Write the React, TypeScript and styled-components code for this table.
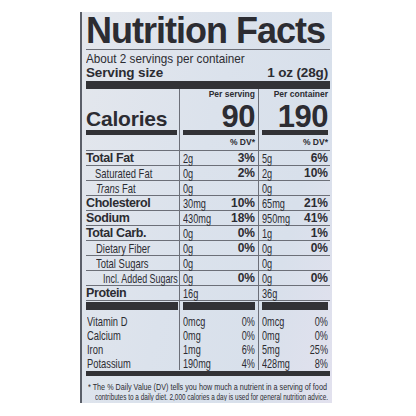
import { FC, ReactNode } from "react";
import styled, { createGlobalStyle } from "styled-components";

const INK = "#2c2c32";
const RULE = "#6c6f78";

const GlobalStyle = createGlobalStyle`
  html, body { margin: 0; padding: 0; background: #ffffff; }
  body { font-family: "Liberation Sans", Arial, sans-serif; color: ${INK}; }
`;

const Page = styled.div`
  width: 416px;
  height: 416px;
  box-sizing: border-box;
  padding: 12px 0 0 80px;
  background: #ffffff;
  overflow: hidden;
`;

const Label = styled.div`
  width: 252px;
  height: 391px;
  box-sizing: border-box;
  border-left: 2px solid #5b5f69;
  padding: 0 2px 0 4px;
  display: flex;
  flex-direction: column;
  background: linear-gradient(105deg, #e4e7ed 0%, #dbe2ec 45%, #d8e0eb 75%, #e2e1ee 100%);
`;

// the label is set in a condensed grotesque, so Liberation Sans gets squeezed
const Narrow = styled.span<{ $s: number; $right?: boolean }>`
  display: inline-block;
  white-space: nowrap;
  transform: scaleX(${(p) => p.$s});
  transform-origin: ${(p) => (p.$right ? "right" : "left")} center;
`;

const Title = styled.h1`
  margin: 0;
  padding: 1.5px 0 1px;
  font-size: 36px;
  line-height: 34px;
  font-weight: 700;
  letter-spacing: -1px;
  white-space: nowrap;
  border-bottom: 1px solid ${RULE};
`;

const Servings = styled.div`
  font-size: 13px;
  line-height: 15px;
  padding-top: 1px;
`;

const ServingSize = styled.div`
  display: flex;
  justify-content: space-between;
  font-size: 13.5px;
  font-weight: 700;
  line-height: 14px;
  letter-spacing: -0.15px;
  padding: 0.5px 2px 0 0;
`;

const Bar = styled.div<{ $h: number; $mt?: number; $mr?: number }>`
  flex: 1;
  height: ${(p) => p.$h}px;
  margin: ${(p) => p.$mt ?? 0}px ${(p) => p.$mr ?? 0}px 0 0;
  background: #323236;
`;

const Row = styled.div<{ $h: number; $line?: boolean }>`
  display: grid;
  grid-template-columns: 93px 79px 72px;
  grid-template-rows: minmax(0, 1fr);
  height: ${(p) => p.$h}px;
  flex: none;
  box-sizing: border-box;
  border-top: ${(p) => (p.$line ? `1px solid ${RULE}` : "none")};
`;

const Cell = styled.div<{ $col: 1 | 2 | 3; $align?: "start" | "end" | "center" }>`
  display: flex;
  align-items: ${(p) => p.$align ?? "center"};
  justify-content: space-between;
  min-width: 0;
  min-height: 0;
  white-space: nowrap;
  border-left: ${(p) => (p.$col === 1 ? "none" : `1px solid ${RULE}`)};
  padding: ${(p) => (p.$col === 1 ? "0" : p.$col === 2 ? "0 3px 0 3px" : "0 2px 0 3px")};
`;

const Small = styled.span`
  margin-left: auto;
  font-size: 8.5px;
  font-weight: 700;
  line-height: 11px;
`;

const CaloriesText = styled.span`
  font-size: 21px;
  font-weight: 700;
  line-height: 21px;
  letter-spacing: -0.2px;
`;

const BigNum = styled.span`
  margin-left: auto;
  margin-top: 1px;
  font-size: 31px;
  font-weight: 700;
  line-height: 31px;
  letter-spacing: -0.5px;
`;

const BoldName = styled.span`
  font-size: 12.5px;
  font-weight: 700;
  letter-spacing: -0.4px;
`;

const Text = styled.span<{ $size: number; $indent?: number }>`
  font-size: ${(p) => p.$size}px;
  margin-left: ${(p) => p.$indent ?? 0}px;
`;

const Pct = styled.span`
  margin-left: auto;
  font-size: 12px;
  font-weight: 700;
`;

const Footnote = styled.div`
  font-size: 9.5px;
  line-height: 9.5px;
  padding-top: 6px;
  white-space: nowrap;
  overflow: hidden;
`;

const NoteLine = styled.div<{ $indent: number }>`
  margin-left: ${(p) => p.$indent}px;
`;

interface INutrient {
  name: ReactNode;
  bold?: boolean;
  indent?: number;
  squeeze?: number;
  serving: string;
  servingPct?: string;
  container: string;
  containerPct?: string;
}

const nutrients: INutrient[] = [
  { name: "Total Fat", bold: true, serving: "2g", servingPct: "3%", container: "5g", containerPct: "6%" },
  { name: "Saturated Fat", indent: 9, serving: "0g", servingPct: "2%", container: "2g", containerPct: "10%" },
  { name: <><i>Trans</i> Fat</>, indent: 10, serving: "0g", container: "0g" },
  { name: "Cholesterol", bold: true, serving: "30mg", servingPct: "10%", container: "65mg", containerPct: "21%" },
  { name: "Sodium", bold: true, serving: "430mg", servingPct: "18%", container: "950mg", containerPct: "41%" },
  { name: "Total Carb.", bold: true, serving: "0g", servingPct: "0%", container: "1g", containerPct: "1%" },
  { name: "Dietary Fiber", indent: 10, serving: "0g", servingPct: "0%", container: "0g", containerPct: "0%" },
  { name: "Total Sugars", indent: 10, serving: "0g", container: "0g" },
  { name: "Incl. Added Sugars", indent: 17, squeeze: 0.66, serving: "0g", servingPct: "0%", container: "0g", containerPct: "0%" },
  { name: "Protein", bold: true, serving: "16g", container: "36g" },
];

const vitamins = [
  { name: "Vitamin D", serving: "0mcg", servingPct: "0%", container: "0mcg", containerPct: "0%" },
  { name: "Calcium", serving: "0mg", servingPct: "0%", container: "0mg", containerPct: "0%" },
  { name: "Iron", serving: "1mg", servingPct: "6%", container: "5mg", containerPct: "25%" },
  { name: "Potassium", serving: "190mg", servingPct: "4%", container: "428mg", containerPct: "8%" },
];

const NutrientRow: FC<{ n: INutrient }> = ({ n }) => (
  <Row $h={15} $line>
    <Cell $col={1}>
      {n.bold ? (
        <BoldName>{n.name}</BoldName>
      ) : (
        <Text $size={13.5} $indent={n.indent}>
          <Narrow $s={n.squeeze ?? 0.7}>{n.name}</Narrow>
        </Text>
      )}
    </Cell>
    <Cell $col={2}>
      <Text $size={13.5}>
        <Narrow $s={0.68}>{n.serving}</Narrow>
      </Text>
      {n.servingPct && <Pct>{n.servingPct}</Pct>}
    </Cell>
    <Cell $col={3}>
      <Text $size={13.5}>
        <Narrow $s={0.68}>{n.container}</Narrow>
      </Text>
      {n.containerPct && <Pct>{n.containerPct}</Pct>}
    </Cell>
  </Row>
);

const App: FC = () => (
  <Page>
    <GlobalStyle />
    <Label>
      <Title>Nutrition Facts</Title>
      <Servings>
        <Narrow $s={0.9}>About 2 servings per container</Narrow>
      </Servings>
      <ServingSize>
        <span>Serving size</span>
        <span>1 oz (28g)</span>
      </ServingSize>
      <Bar $h={8} $mt={1} style={{ flex: "none" }} />

      <Row $h={11}>
        <Cell $col={1} />
        <Cell $col={2} $align="start">
          <Small>Per serving</Small>
        </Cell>
        <Cell $col={3} $align="start">
          <Small>Per container</Small>
        </Cell>
      </Row>
      <Row $h={29}>
        <Cell $col={1} $align="end">
          <CaloriesText>Calories</CaloriesText>
        </Cell>
        <Cell $col={2} $align="start">
          <BigNum>90</BigNum>
        </Cell>
        <Cell $col={3} $align="start">
          <BigNum>190</BigNum>
        </Cell>
      </Row>
      <Row $h={6}>
        <Cell $col={1} $align="end">
          <Bar $h={5} $mr={2} />
        </Cell>
        <Cell $col={2} $align="end">
          <Bar $h={5} />
        </Cell>
        <Cell $col={3} $align="end">
          <Bar $h={5} />
        </Cell>
      </Row>
      <Row $h={15}>
        <Cell $col={1} />
        <Cell $col={2}>
          <Small>% DV*</Small>
        </Cell>
        <Cell $col={3}>
          <Small>% DV*</Small>
        </Cell>
      </Row>

      {nutrients.map((n, i) => (
        <NutrientRow key={i} n={n} />
      ))}

      <Row $h={14} $line>
        <Cell $col={1} $align="start">
          <Bar $h={8} $mt={1} $mr={1} />
        </Cell>
        <Cell $col={2} $align="start">
          <Bar $h={8} $mt={1} />
        </Cell>
        <Cell $col={3} $align="start">
          <Bar $h={8} $mt={1} />
        </Cell>
      </Row>
      {vitamins.map((v) => (
        <Row $h={14} key={v.name}>
          <Cell $col={1}>
            <Text $size={13} $indent={1}>
              <Narrow $s={0.72}>{v.name}</Narrow>
            </Text>
          </Cell>
          <Cell $col={2}>
            <Text $size={13}>
              <Narrow $s={0.7}>{v.serving}</Narrow>
            </Text>
            <Text $size={13}>
              <Narrow $s={0.7} $right>
                {v.servingPct}
              </Narrow>
            </Text>
          </Cell>
          <Cell $col={3}>
            <Text $size={13}>
              <Narrow $s={0.7}>{v.container}</Narrow>
            </Text>
            <Text $size={13}>
              <Narrow $s={0.7} $right>
                {v.containerPct}
              </Narrow>
            </Text>
          </Cell>
        </Row>
      ))}
      <Bar $h={5} $mt={1} style={{ flex: "none" }} />

      <Footnote>
        <NoteLine $indent={2}>
          <Narrow $s={0.76}>* The % Daily Value (DV) tells you how much a nutrient in a serving of food</Narrow>
        </NoteLine>
        <NoteLine $indent={9}>
          <Narrow $s={0.675}>
            contributes to a daily diet. 2,000 calories a day is used for general nutrition advice.
          </Narrow>
        </NoteLine>
      </Footnote>
    </Label>
  </Page>
);

export default App;
